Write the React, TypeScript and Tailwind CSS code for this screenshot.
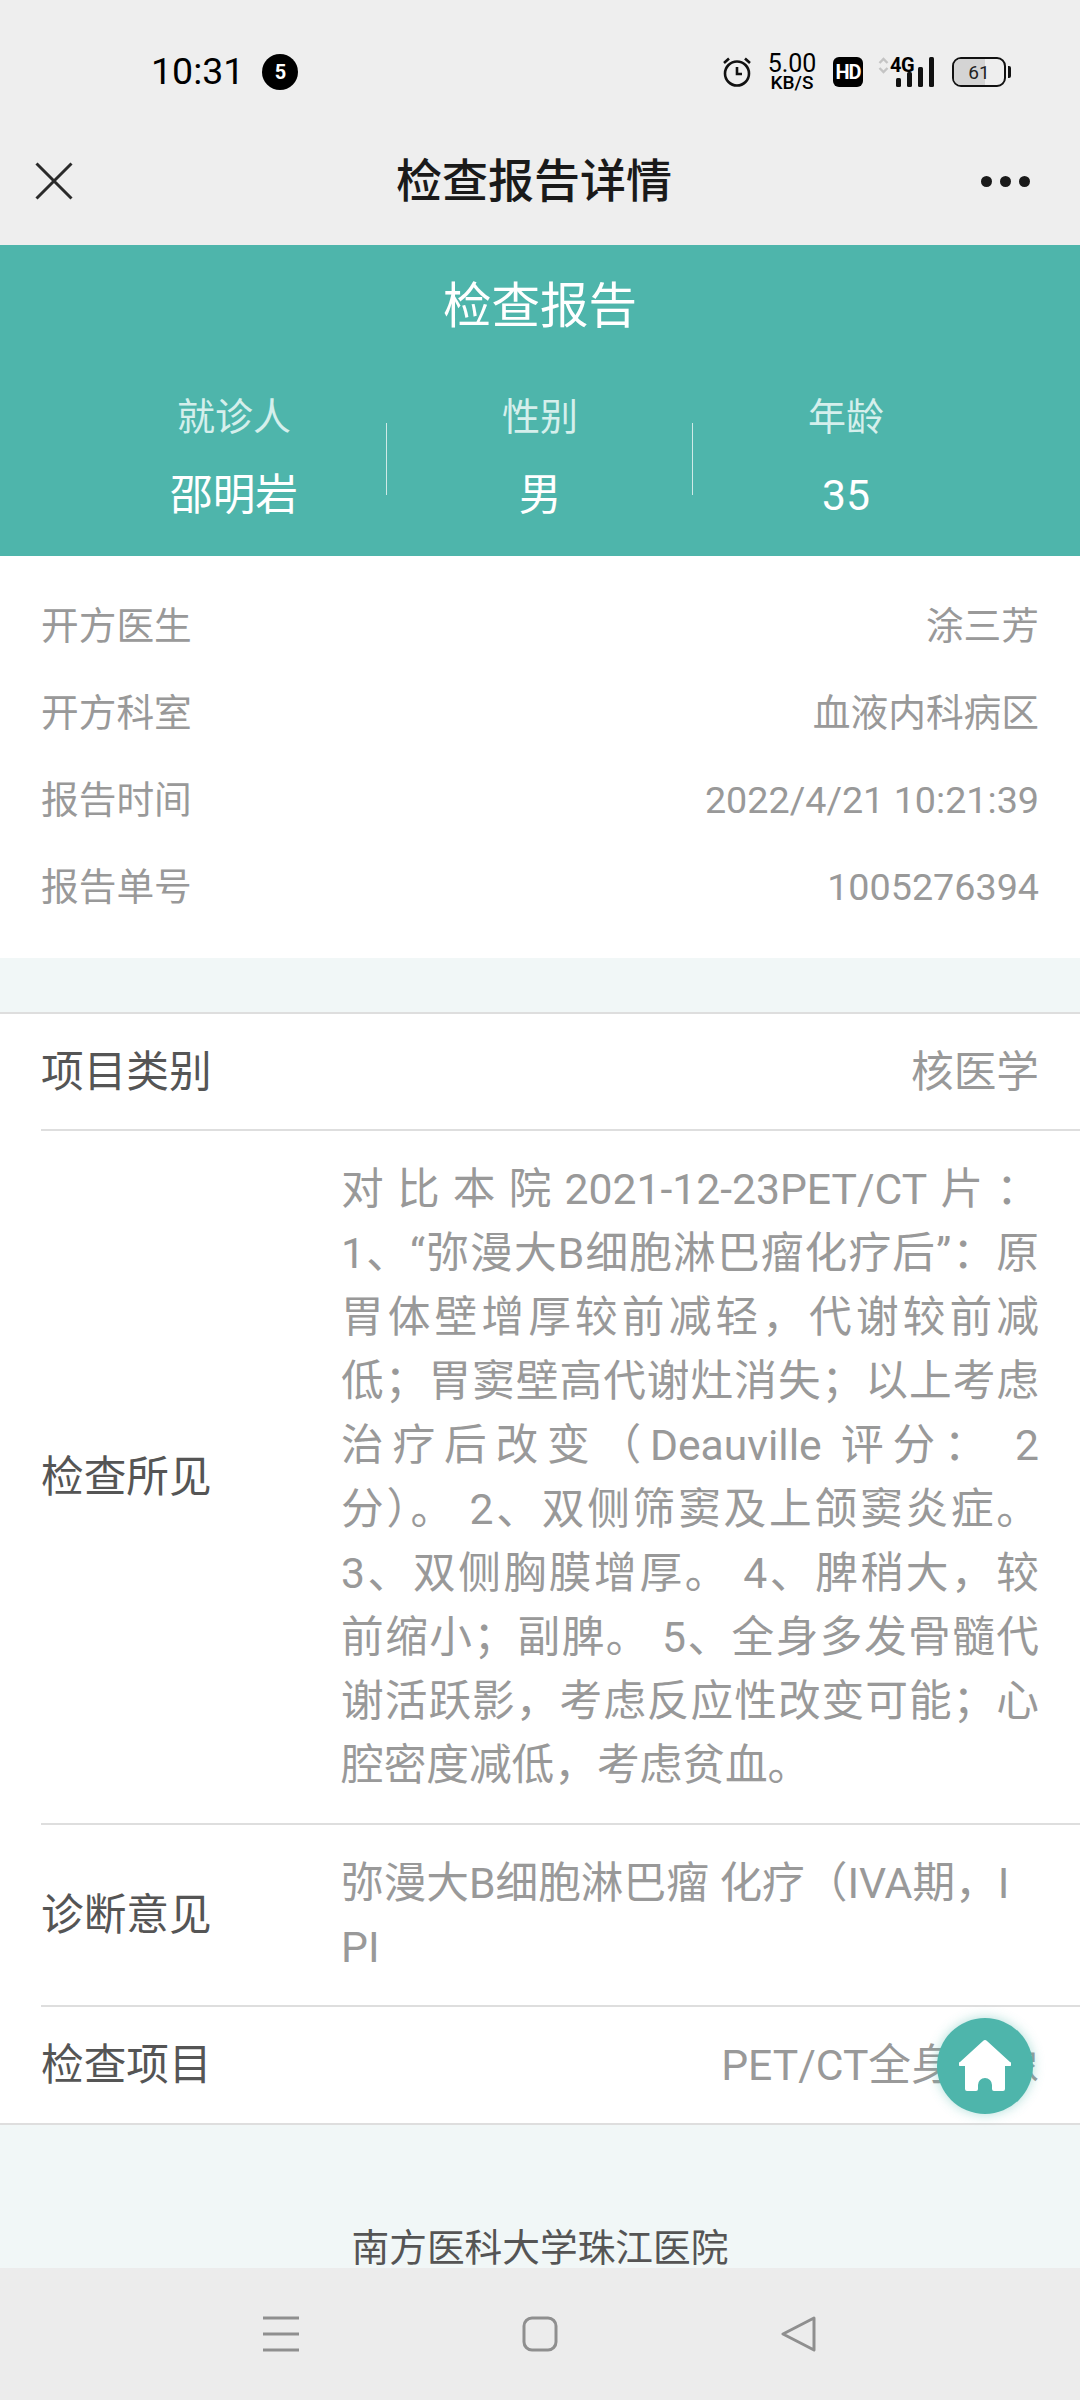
const font = "font-['Roboto','Noto_Sans_CJK_SC',sans-serif]";

const INFO = [
  ["开方医生", "涂三芳"],
  ["开方科室", "血液内科病区"],
  ["报告时间", "2022/4/21 10:21:39"],
  ["报告单号", "1005276394"],
];

const StatusBar = () => (
  <div className="flex h-[120px] shrink-0 items-center justify-between bg-[#eeeeee] pt-[24px] pr-[69px] pl-[151px] text-black">
    <div className="flex items-center gap-[18px]">
      <span className="text-[37.5px] leading-none">10:31</span>
      <span className="flex h-[36px] w-[36px] items-center justify-center rounded-full bg-black text-[20px] font-bold text-white">5</span>
    </div>
    <div className="flex items-center">
      <svg width="30" height="30" viewBox="0 0 30 30" fill="none" stroke="#111" strokeWidth="2.6">
        <circle cx="15" cy="16.5" r="12" />
        <path d="M15 10v7h5M2 6l5-4.5M28 6l-5-4.5" />
      </svg>
      <div className="ml-[15px] flex w-[50px] flex-col items-center">
        <span className="text-[25px] leading-[20px]">5.00</span>
        <span className="text-[19px] leading-[17px] font-medium">KB/S</span>
      </div>
      <span className="ml-[16px] flex h-[30px] w-[30px] items-center justify-center rounded-[6px] bg-black text-[20px] leading-none font-bold tracking-[-1px] text-white">HD</span>
      <div className="relative ml-[15px] h-[30px] w-[56px]">
        <svg className="absolute top-0 left-0" width="11" height="17" viewBox="0 0 11 17" fill="none" stroke="#c4c4c4" strokeWidth="2.4">
          <path d="M1.5 6l4-4 4 4M1.5 11l4 4 4-4" />
        </svg>
        <span className="absolute top-[-2px] left-[12px] text-[20px] leading-[20px] font-bold tracking-[-0.5px]">4G</span>
        <svg className="absolute top-0 left-0" width="56" height="30" viewBox="0 0 56 30" fill="#111">
          <rect x="18" y="21" width="5" height="9" rx="1.5" />
          <rect x="29" y="15" width="5" height="15" rx="1.5" />
          <rect x="40" y="10" width="5" height="20" rx="1.5" />
          <rect x="51" y="0" width="5" height="30" rx="1.5" />
        </svg>
      </div>
      <div className="ml-[18px] flex items-center">
        <div className="relative h-[30px] w-[54px] overflow-hidden rounded-[9px] border-[2.5px] border-[#111]">
          <div className="h-full w-[31px] bg-[#d4d4d4]" />
          <span className="absolute inset-0 flex items-center justify-center text-[19px] leading-none text-[#222]">61</span>
        </div>
        <div className="ml-[2px] h-[12px] w-[3px] rounded-r-[2px] bg-[#111]" />
      </div>
    </div>
  </div>
);

const TitleBar = () => (
  <div className="flex h-[125px] shrink-0 items-center bg-[#eeeeee] pb-[3px] text-[#1a1a1a]">
    <div className="w-[100px] pl-[35px]">
      <svg className="block" width="38" height="38" viewBox="0 0 38 38" fill="none" stroke="#2a2a2a" strokeWidth="3">
        <path d="M1.5 1.5l35 35M36.5 1.5l-35 35" />
      </svg>
    </div>
    <div className="flex-1 text-center text-[46px] leading-none font-medium">检查报告详情</div>
    <div className="flex w-[112px] justify-end gap-[8px] pr-[50px]">
      <span className="h-[11px] w-[11px] rounded-full bg-[#1a1a1a]" />
      <span className="h-[11px] w-[11px] rounded-full bg-[#1a1a1a]" />
      <span className="h-[11px] w-[11px] rounded-full bg-[#1a1a1a]" />
    </div>
  </div>
);

const Stat = ({ label, value }: { label: string; value: string }) => (
  <div className="w-[306px] text-center">
    <div className="text-[38px] leading-[50px] text-[#d5efec]">{label}</div>
    <div className="mt-[28px] text-[42.67px] leading-[50px] text-white">{value}</div>
  </div>
);

const Row = ({ label, children }: { label: string; children: React.ReactNode }) => (
  <div className="flex items-center border-b-2 border-[#dedede] py-[26px] pr-[41px]">
    <div className="w-[300px] shrink-0 leading-[64px] text-[#555555]">{label}</div>
    {children}
  </div>
);

export default function App() {
  return (
    <div className={`relative flex h-[2400px] w-[1080px] flex-col overflow-hidden bg-[#f1f7f7] ${font}`}>
      <StatusBar />
      <TitleBar />

      <main className="min-h-0 flex-1 overflow-hidden">
        <section className="h-[311px] bg-[#4eb5ab] pt-[34px]">
          <h1 className="text-center text-[48.5px] leading-[56px] font-normal text-white">检查报告</h1>
          <div className="mx-auto mt-[57px] flex w-[918px] items-center">
            <Stat label="就诊人" value="邵明岩" />
            <div className="mt-[6px] -ml-px h-[72px] w-px bg-[#cfeae7]" />
            <Stat label="性别" value="男" />
            <div className="mt-[6px] -ml-px h-[72px] w-px bg-[#cfeae7]" />
            <Stat label="年龄" value="35" />
          </div>
        </section>

        <section className="h-[402px] bg-white px-[41px] pt-[27px] text-[37.7px] leading-[87px] text-[#999999]">
          {INFO.map(([k, v]) => (
            <div key={k} className="flex justify-between">
              <span>{k}</span>
              <span>{v}</span>
            </div>
          ))}
        </section>

        <section className="mt-[54px] border-y-2 border-[#dedede] bg-white pl-[41px] text-[42.67px] text-[#999999]">
          <div className="flex h-[117px] items-center justify-between border-b-2 border-[#dedede] pr-[41px]">
            <span className="text-[#555555]">项目类别</span>
            <span>核医学</span>
          </div>
          <Row label="检查所见">
            <p className="flex-1 text-justify leading-[64px]">
              对比本院2021-12-23PET/CT片：1、“弥漫大B细胞淋巴瘤化疗后”：原胃体壁增厚较前减轻，代谢较前减低；胃窦壁高代谢灶消失；以上考虑治疗后改变（Deauville 评分： 2分）。 2、双侧筛窦及上颌窦炎症。 3、双侧胸膜增厚。 4、脾稍大，较前缩小；副脾。 5、全身多发骨髓代谢活跃影，考虑反应性改变可能；心腔密度减低，考虑贫血。
            </p>
          </Row>
          <Row label="诊断意见">
            <p className="flex-1 leading-[64px] break-all">
              弥漫大B细胞淋巴瘤 化疗（IVA期，I
              <br />
              PI
            </p>
          </Row>
          <div className="flex h-[116px] items-center justify-between pr-[41px]">
            <span className="text-[#555555]">检查项目</span>
            <span>PET/CT全身显像</span>
          </div>
        </section>

        <p className="pt-[98px] text-center text-[37.7px] leading-[50px] text-[#555555]">南方医科大学珠江医院</p>
      </main>

      <nav className="flex h-[132px] shrink-0 items-center justify-center gap-[223px] bg-[#ececec]">
        <svg width="36" height="36" viewBox="0 0 36 36" fill="none" stroke="#8f8f8f" strokeWidth="3">
          <path d="M0 2h36M0 18h36M0 34h36" />
        </svg>
        <svg width="36" height="36" viewBox="0 0 36 36" fill="none" stroke="#8f8f8f" strokeWidth="3">
          <rect x="2" y="2" width="32" height="32" rx="8" />
        </svg>
        <svg width="36" height="36" viewBox="0 0 36 36" fill="none" stroke="#8f8f8f" strokeWidth="3" strokeLinejoin="round">
          <path d="M33 2L2 18l31 16z" />
        </svg>
      </nav>

      <button className="absolute top-[2018px] left-[937px] flex h-[96px] w-[96px] items-center justify-center rounded-full bg-[#4eb5ab] shadow-[0_0_12px_rgba(78,181,171,0.45)]">
        <svg width="52" height="52" viewBox="0 0 52 52" fill="#fff">
          <path d="M24 1a3 3 0 0 1 4 0l23 21a2 2 0 0 1-1 4h-4v23a2 2 0 0 1-2 2H35a2 2 0 0 1-2-2v-4a7 7 0 0 0-14 0v4a2 2 0 0 1-2 2H8a2 2 0 0 1-2-2V26H2a2 2 0 0 1-1-4z" />
        </svg>
      </button>
    </div>
  );
}
